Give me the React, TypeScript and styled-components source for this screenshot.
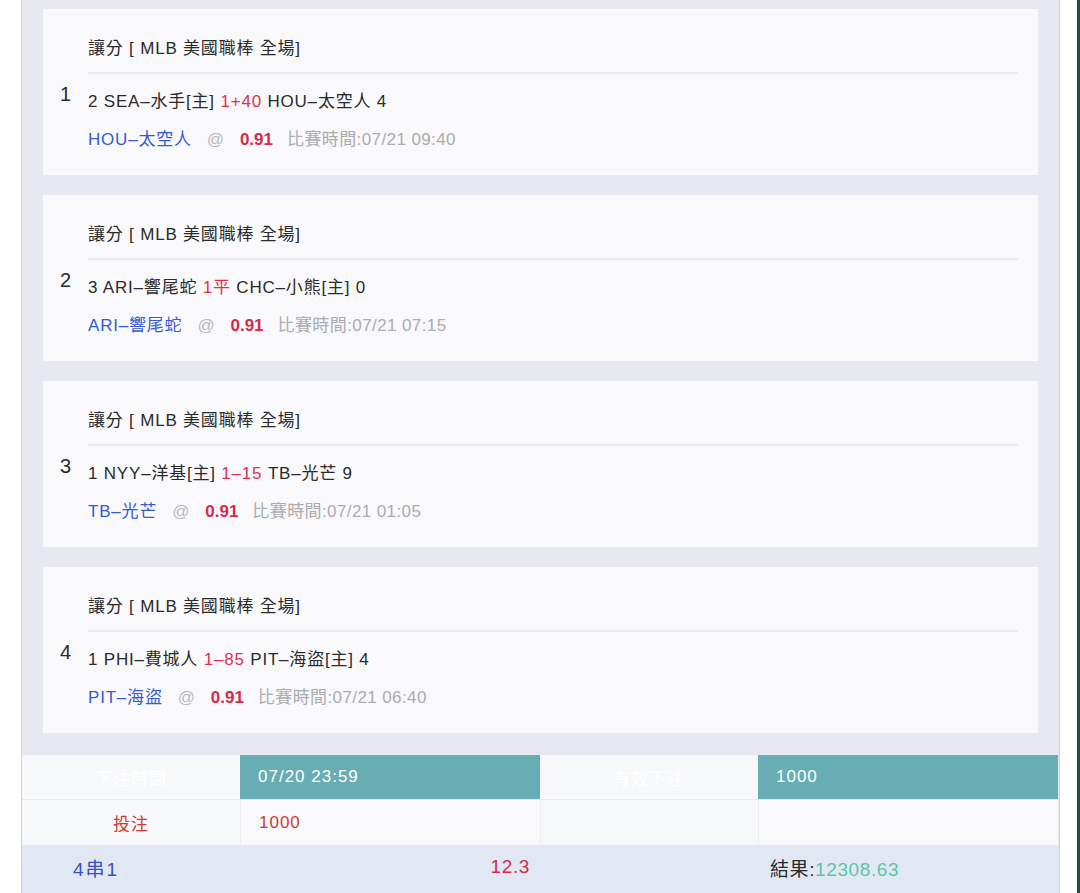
import React from "react";
import styled, { createGlobalStyle } from "styled-components";

const GlobalStyle = createGlobalStyle`
  html, body {
    margin: 0;
    padding: 0;
    background: #ffffff;
    font-family: "Liberation Sans", "Noto Sans CJK TC", sans-serif;
    color: #2a2a2a;
  }
  * { box-sizing: border-box; }
`;

const Page = styled.div`
  display: flex;
  height: 893px;
  overflow: hidden;
  padding-left: 21px;
`;

const Panel = styled.div`
  width: 1039px;
  border-left: 1px solid #cdd0d6;
  border-right: 1px solid #cdd0d6;
  background: #e8e9f0;
  display: flex;
  flex-direction: column;
`;

const EdgeStrip = styled.div`
  margin-left: auto;
  width: 3px;
  background: #2b4a4c;
`;

const CardList = styled.div`
  display: flex;
  flex-direction: column;
  gap: 20px;
  padding: 9px 21px 22px 21px;
`;

const Card = styled.div`
  display: flex;
  height: 166px;
  background: #f9f9fb;
  padding: 0 20px 0 17px;
`;

const Index = styled.div`
  width: 28px;
  flex: none;
  padding-top: 73px;
  font-size: 20px;
  line-height: 24px;
  color: #2a2a2a;
`;

const Body = styled.div`
  flex: 1;
  display: flex;
  flex-direction: column;
  padding-top: 27px;
  letter-spacing: 0.8px;
`;

const Heading = styled.div`
  font-size: 17px;
  line-height: 26px;
  color: #2a2a2a;
  padding-bottom: 10px;
  border-bottom: 2px solid #ebebef;
`;

const Line = styled.div<{ $gap: number }>`
  font-size: 17px;
  line-height: 26px;
  margin-top: ${(p) => p.$gap}px;
  color: #2a2a2a;
  white-space: nowrap;
`;

const Red = styled.span`
  color: #df2f50;
`;

const Team = styled.span`
  color: #3659d4;
  margin-right: 15px;
`;

const At = styled.span`
  color: #b8b8bd;
  margin-right: 15px;
`;

const Odds = styled.span`
  color: #d52a4c;
  font-weight: bold;
  letter-spacing: 0;
  margin-right: 14px;
`;

const Time = styled.span`
  color: #ababb0;
  letter-spacing: 0.4px;
`;

const Grid = styled.div`
  display: grid;
  grid-template-columns: 218px 300px 218px 300px;
`;

const Cell = styled.div<{ $bg: string; $color: string; $center?: boolean; $h: number; $border?: boolean }>`
  height: ${(p) => p.$h}px;
  display: flex;
  align-items: center;
  justify-content: ${(p) => (p.$center ? "center" : "flex-start")};
  padding-left: ${(p) => (p.$center ? 0 : 18)}px;
  background: ${(p) => p.$bg};
  color: ${(p) => p.$color};
  font-size: 17px;
  letter-spacing: 1px;
  border-left: ${(p) => (p.$border ? "1px solid #eceef2" : "none")};
`;

const RowDivider = styled.div`
  height: 1px;
  background: #e6e8ee;
`;

const Summary = styled.div`
  display: grid;
  grid-template-columns: 218px 300px 218px 300px;
  height: 48px;
  padding-bottom: 4px;
  align-items: center;
  background: #e2e8f3;
  font-size: 19px;
  letter-spacing: 0.6px;
`;

const Combo = styled.div`
  padding-left: 51px;
  color: #3450c8;
  letter-spacing: 2px;
`;

const Payout = styled.div`
  text-align: right;
  padding-right: 10px;
  color: #d52a4c;
`;

const Result = styled.div`
  padding-left: 12px;
  color: #2a2a2a;
`;

const Win = styled.span`
  color: #5cc4a6;
`;

type Bet = {
  idx: number;
  home: string;
  mid: string;
  away: string;
  pick: string;
  time: string;
};

const bets: Bet[] = [
  { idx: 1, home: "2 SEA–水手[主] ", mid: "1+40", away: " HOU–太空人 4", pick: "HOU–太空人", time: "07/21 09:40" },
  { idx: 2, home: "3 ARI–響尾蛇 ", mid: "1平", away: " CHC–小熊[主] 0", pick: "ARI–響尾蛇", time: "07/21 07:15" },
  { idx: 3, home: "1 NYY–洋基[主] ", mid: "1–15", away: " TB–光芒 9", pick: "TB–光芒", time: "07/21 01:05" },
  { idx: 4, home: "1 PHI–費城人 ", mid: "1–85", away: " PIT–海盜[主] 4", pick: "PIT–海盜", time: "07/21 06:40" },
];

export default function App() {
  return (
    <>
      <GlobalStyle />
      <Page>
        <Panel>
          <CardList>
            {bets.map((b) => (
              <Card key={b.idx}>
                <Index>{b.idx}</Index>
                <Body>
                  <Heading>讓分 [ MLB 美國職棒 全場]</Heading>
                  <Line $gap={15}>
                    {b.home}
                    <Red>{b.mid}</Red>
                    {b.away}
                  </Line>
                  <Line $gap={12}>
                    <Team>{b.pick}</Team>
                    <At>@</At>
                    <Odds>0.91</Odds>
                    <Time>比賽時間:{b.time}</Time>
                  </Line>
                </Body>
              </Card>
            ))}
          </CardList>
          <Grid>
            <Cell $h={44} $bg="#f7f8fa" $color="#ffffff" $center>下注時間</Cell>
            <Cell $h={44} $bg="#67adb3" $color="#ffffff">07/20 23:59</Cell>
            <Cell $h={44} $bg="#f7f8fa" $color="#ffffff" $center>有效下注</Cell>
            <Cell $h={44} $bg="#67adb3" $color="#ffffff">1000</Cell>
          </Grid>
          <RowDivider />
          <Grid>
            <Cell $h={45} $bg="#f7f8fa" $color="#cc3a33" $center>投注</Cell>
            <Cell $h={45} $bg="#f9f9fb" $color="#cc3a33" $border>1000</Cell>
            <Cell $h={45} $bg="#f7f8fa" $color="#333" $border></Cell>
            <Cell $h={45} $bg="#f9f9fb" $color="#333" $border></Cell>
          </Grid>
          <Summary>
            <Combo>4串1</Combo>
            <Payout>12.3</Payout>
            <div />
            <Result>
              結果:<Win>12308.63</Win>
            </Result>
          </Summary>
        </Panel>
        <EdgeStrip />
      </Page>
    </>
  );
}
